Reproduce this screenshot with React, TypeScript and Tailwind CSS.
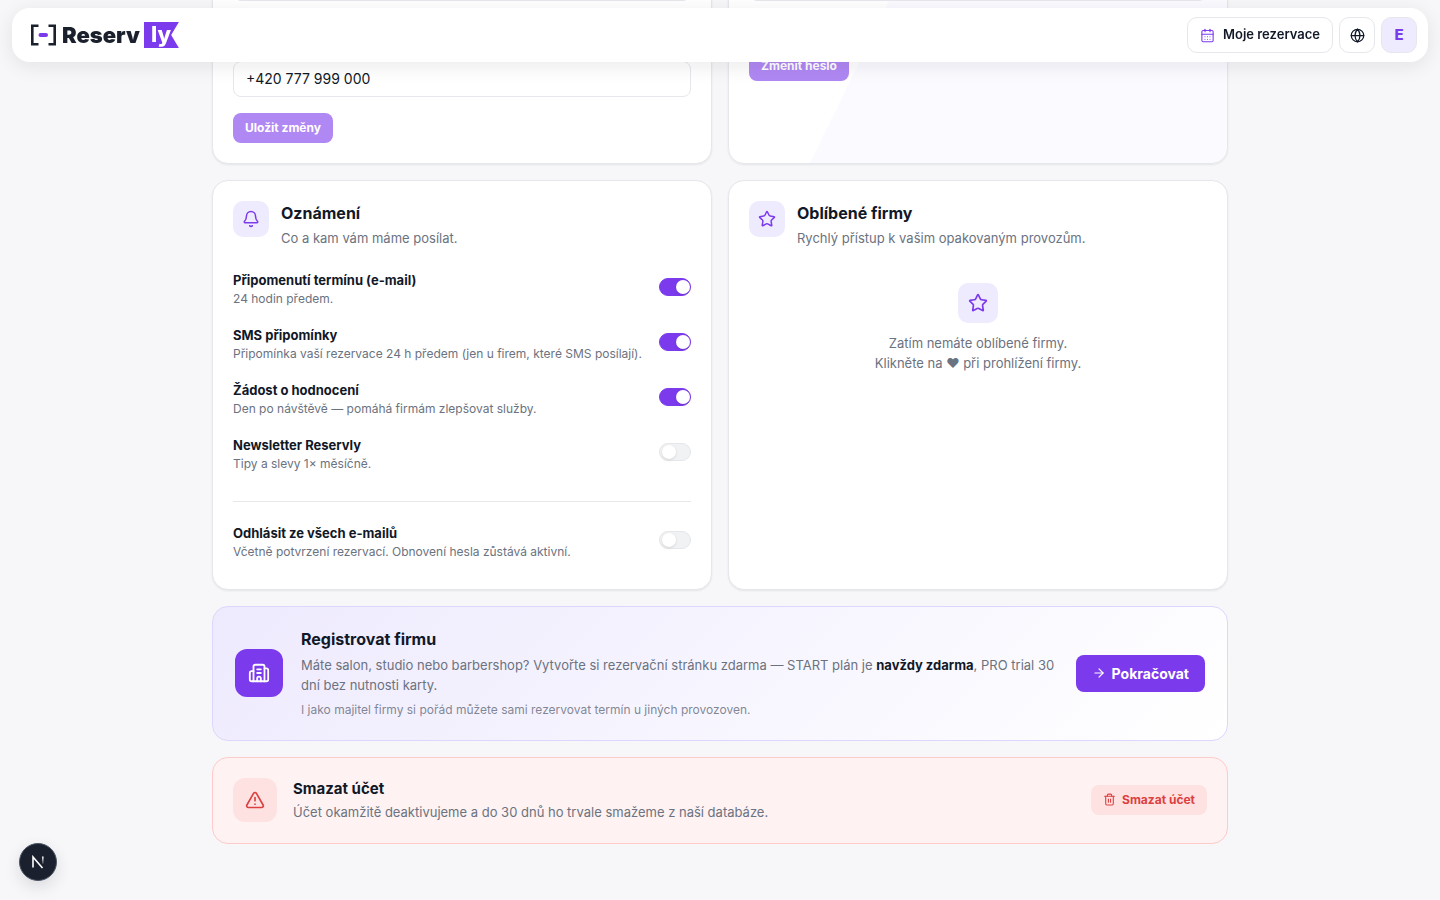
import type { ReactNode } from "react";
import {
  ArrowRight,
  Bell,
  Building2,
  CalendarDays,
  Globe,
  Star,
  Trash2,
  TriangleAlert,
} from "lucide-react";

function Logo() {
  return (
    <a href="#" aria-label="Reservly" className="flex items-center text-[#1a202c]">
      <svg width="25" height="22" viewBox="0 0 25 22" fill="none" aria-hidden="true">
        <path
          d="M7.5 1.8H1.3V20.2H7.5M17.5 1.8H23.7V20.2H17.5"
          stroke="currentColor"
          strokeWidth="2.6"
        />
        <path d="M9.5 11H15" stroke="#7c3aed" strokeWidth="4" strokeLinecap="round" />
      </svg>
      <span className="ml-1.5 text-[22px] leading-[26px] font-black">Reserv</span>
      <span className="ml-1 h-[26px] w-[35px] bg-[#7c3aed] pl-[7px] text-[22px] leading-[25px] font-extrabold text-white [clip-path:polygon(0_0,100%_0,78%_50%,100%_100%,0_100%)]">
        ly
      </span>
    </a>
  );
}

function Header() {
  return (
    <header className="fixed inset-x-3 top-2 z-10 flex h-[54px] items-center justify-between rounded-[18px] bg-white pr-[11px] pl-[19px] shadow-[0_4px_20px_rgba(17,24,39,0.09)]">
      <Logo />
      <nav className="flex items-center gap-1.5">
        <a
          href="#"
          className="flex h-9 items-center gap-2 rounded-[10px] border border-[#e5e7eb] px-3 text-[13px] font-semibold"
        >
          <CalendarDays size={15} strokeWidth={1.75} className="text-[#7c3aed]" />
          Moje rezervace
        </a>
        <button
          type="button"
          aria-label="Jazyk"
          className="grid size-9 place-items-center rounded-[10px] border border-[#e5e7eb]"
        >
          <Globe size={15} strokeWidth={2} />
        </button>
        <button
          type="button"
          aria-label="Účet"
          className="grid size-9 place-items-center rounded-[10px] border border-[#e5e7eb] bg-[#efebff] text-[15px] font-extrabold text-[#7c3aed]"
        >
          E
        </button>
      </nav>
    </header>
  );
}

function Card({ children, className = "bg-white" }: { children: ReactNode; className?: string }) {
  return (
    <section
      className={`min-w-0 rounded-2xl border border-[#e5e7eb] p-5 shadow-[0_1px_2px_rgba(17,24,39,0.08)] ${className}`}
    >
      {children}
    </section>
  );
}

const fieldClass =
  "block h-9 w-full rounded-lg border border-[#e5e7eb] bg-white px-3 pb-0.5 text-[14px] outline-none";
const disabledButton =
  "h-[30px] rounded-lg bg-[#b088f3] px-3 text-[12px] font-bold text-white";

function CardHead({ icon, title, text }: { icon: ReactNode; title: string; text: string }) {
  return (
    <div className="flex gap-3">
      <div className="grid size-9 shrink-0 place-items-center rounded-[10px] bg-[#efebff] text-[#7c3aed]">
        {icon}
      </div>
      <div>
        <h2 className="text-[16px] leading-6 font-bold">{title}</h2>
        <p className="mt-[3px] text-[13px] leading-5 text-[#6b7280]">{text}</p>
      </div>
    </div>
  );
}

type Setting = { id: string; title: string; text: string; on: boolean };

const settings: Setting[] = [
  { id: "reminder", title: "Připomenutí termínu (e-mail)", text: "24 hodin předem.", on: true },
  {
    id: "sms",
    title: "SMS připomínky",
    text: "Připomínka vaší rezervace 24 h předem (jen u firem, které SMS posílají).",
    on: true,
  },
  {
    id: "review",
    title: "Žádost o hodnocení",
    text: "Den po návštěvě — pomáhá firmám zlepšovat služby.",
    on: true,
  },
  { id: "newsletter", title: "Newsletter Reservly", text: "Tipy a slevy 1× měsíčně.", on: false },
];

function Toggle({ item }: { item: Setting }) {
  return (
    <div className="flex items-start justify-between gap-4">
      <label htmlFor={item.id} className="min-w-0">
        <span className="block text-[13px] leading-5 font-bold">{item.title}</span>
        <span className="block text-[12px] leading-[18px] text-[#6b7280]">{item.text}</span>
      </label>
      <input
        id={item.id}
        type="checkbox"
        role="switch"
        defaultChecked={item.on}
        className="mt-2 flex h-[18px] w-8 shrink-0 appearance-none items-center rounded-full border border-[#e5e7eb] bg-[#f1f2f4] pl-0.5 before:size-3.5 before:rounded-full before:bg-white before:shadow-sm checked:justify-end checked:border-[#7c3aed] checked:bg-[#7c3aed]"
      />
    </div>
  );
}

export default function App() {
  return (
    <div className="min-h-screen overflow-hidden bg-[#f7f7f9] font-['Inter',sans-serif] text-[#111827]">
      <Header />
      <main className="mx-auto -mt-14 flex max-w-[1048px] flex-col gap-4 px-4 pb-14">
        <div className="grid grid-cols-2 gap-4">
          <Card>
            <input aria-label="E-mail" type="email" className={fieldClass} />
            <input
              aria-label="Telefon"
              type="tel"
              defaultValue="+420 777 999 000"
              className={`mt-15 ${fieldClass}`}
            />
            <button type="button" className={`mt-4 ${disabledButton}`}>
              Uložit změny
            </button>
          </Card>
          <Card className="bg-[linear-gradient(116deg,#fff_31%,#fbfaff_31%)]">
            <input aria-label="Heslo" type="password" className={fieldClass} />
            <button type="button" className={`mt-[50px] ${disabledButton}`}>
              Změnit heslo
            </button>
          </Card>
        </div>

        <div className="grid grid-cols-2 gap-4">
          <Card>
            <CardHead
              icon={<Bell size={18} strokeWidth={2} />}
              title="Oznámení"
              text="Co a kam vám máme posílat."
            />
            <div className="mt-[22px] flex flex-col gap-[17px]">
              {settings.map((item) => (
                <Toggle key={item.id} item={item} />
              ))}
            </div>
            <div className="mt-7 border-t border-[#e5e7eb] pt-[21px] pb-2">
              <Toggle
                item={{
                  id: "unsubscribe",
                  title: "Odhlásit ze všech e-mailů",
                  text: "Včetně potvrzení rezervací. Obnovení hesla zůstává aktivní.",
                  on: false,
                }}
              />
            </div>
          </Card>
          <Card>
            <CardHead
              icon={<Star size={18} strokeWidth={2} />}
              title="Oblíbené firmy"
              text="Rychlý přístup k vašim opakovaným provozům."
            />
            <div className="mt-[35px] flex flex-col items-center text-center">
              <div className="grid size-10 place-items-center rounded-[10px] bg-[#efebff] text-[#7c3aed]">
                <Star size={20} strokeWidth={2} />
              </div>
              <p className="mt-2.5 text-[13px] leading-5 text-[#6b7280]">
                Zatím nemáte oblíbené firmy.
                <br />
                Klikněte na ♥ při prohlížení firmy.
              </p>
            </div>
          </Card>
        </div>

        <section className="flex items-center gap-[18px] rounded-2xl border border-[#ddd6fe] bg-[linear-gradient(135deg,#eeeafe,#fff)] px-[22px] pt-5 pb-[21px]">
          <div className="grid size-12 shrink-0 place-items-center rounded-xl bg-[#7c3aed] text-white">
            <Building2 size={22} strokeWidth={2} />
          </div>
          <div className="min-w-0 flex-1">
            <h2 className="text-[16px] leading-6 font-bold">Registrovat firmu</h2>
            <p className="mt-1 text-[13px] leading-5 text-[#6b7280]">
              Máte salon, studio nebo barbershop? Vytvořte si rezervační stránku zdarma — START plán
              je <strong className="font-bold text-[#111827]">navždy zdarma</strong>, PRO trial
              30 dní bez nutnosti karty.
            </p>
            <p className="mt-1.5 text-[12px] leading-[18px] text-[#6b7280]/85">
              I jako majitel firmy si pořád můžete sami rezervovat termín u jiných provozoven.
            </p>
          </div>
          <button
            type="button"
            className="flex h-[37px] shrink-0 items-center gap-1.5 rounded-lg bg-[#7c3aed] px-4 text-[14px] font-bold text-white"
          >
            <ArrowRight size={14} strokeWidth={2} />
            Pokračovat
          </button>
        </section>

        <section className="flex items-center gap-4 rounded-2xl border border-[#fecaca] bg-[#fef2f2] px-5 pt-[19px] pb-[21px]">
          <div className="grid size-11 shrink-0 place-items-center rounded-xl bg-[#fee2e2] text-[#dc4040]">
            <TriangleAlert size={20} strokeWidth={2} />
          </div>
          <div className="min-w-0 flex-1">
            <h2 className="text-[15px] leading-6 font-bold">Smazat účet</h2>
            <p className="mt-px text-[13px] leading-5 text-[#6b7280]">
              Účet okamžitě deaktivujeme a do 30 dnů ho trvale smažeme z naší databáze.
            </p>
          </div>
          <button
            type="button"
            className="flex h-[30px] shrink-0 items-center gap-1.5 rounded-lg bg-[#fee2e2] px-3 text-[12px] font-bold text-[#dc4040]"
          >
            <Trash2 size={13} strokeWidth={2} />
            Smazat účet
          </button>
        </section>
      </main>

      <button
        type="button"
        aria-label="Next.js"
        className="fixed bottom-[19px] left-[19px] grid size-[38px] place-items-center rounded-full border border-[#4b5563] bg-[#1a202e] shadow-[0_6px_16px_rgba(17,24,39,0.12)]"
      >
        <svg width="14" height="14" viewBox="0 0 14 14" fill="none" aria-hidden="true">
          <defs>
            <linearGradient id="stem" x1="0" y1="0" x2="0" y2="1">
              <stop stopColor="#fff" />
              <stop offset="1" stopColor="#fff" stopOpacity="0.1" />
            </linearGradient>
          </defs>
          <path d="M2 12.5V2L11.5 13" stroke="#fff" strokeWidth="1.6" />
          <rect x="11" y="1.5" width="1.6" height="7.5" fill="url(#stem)" />
        </svg>
      </button>
    </div>
  );
}
